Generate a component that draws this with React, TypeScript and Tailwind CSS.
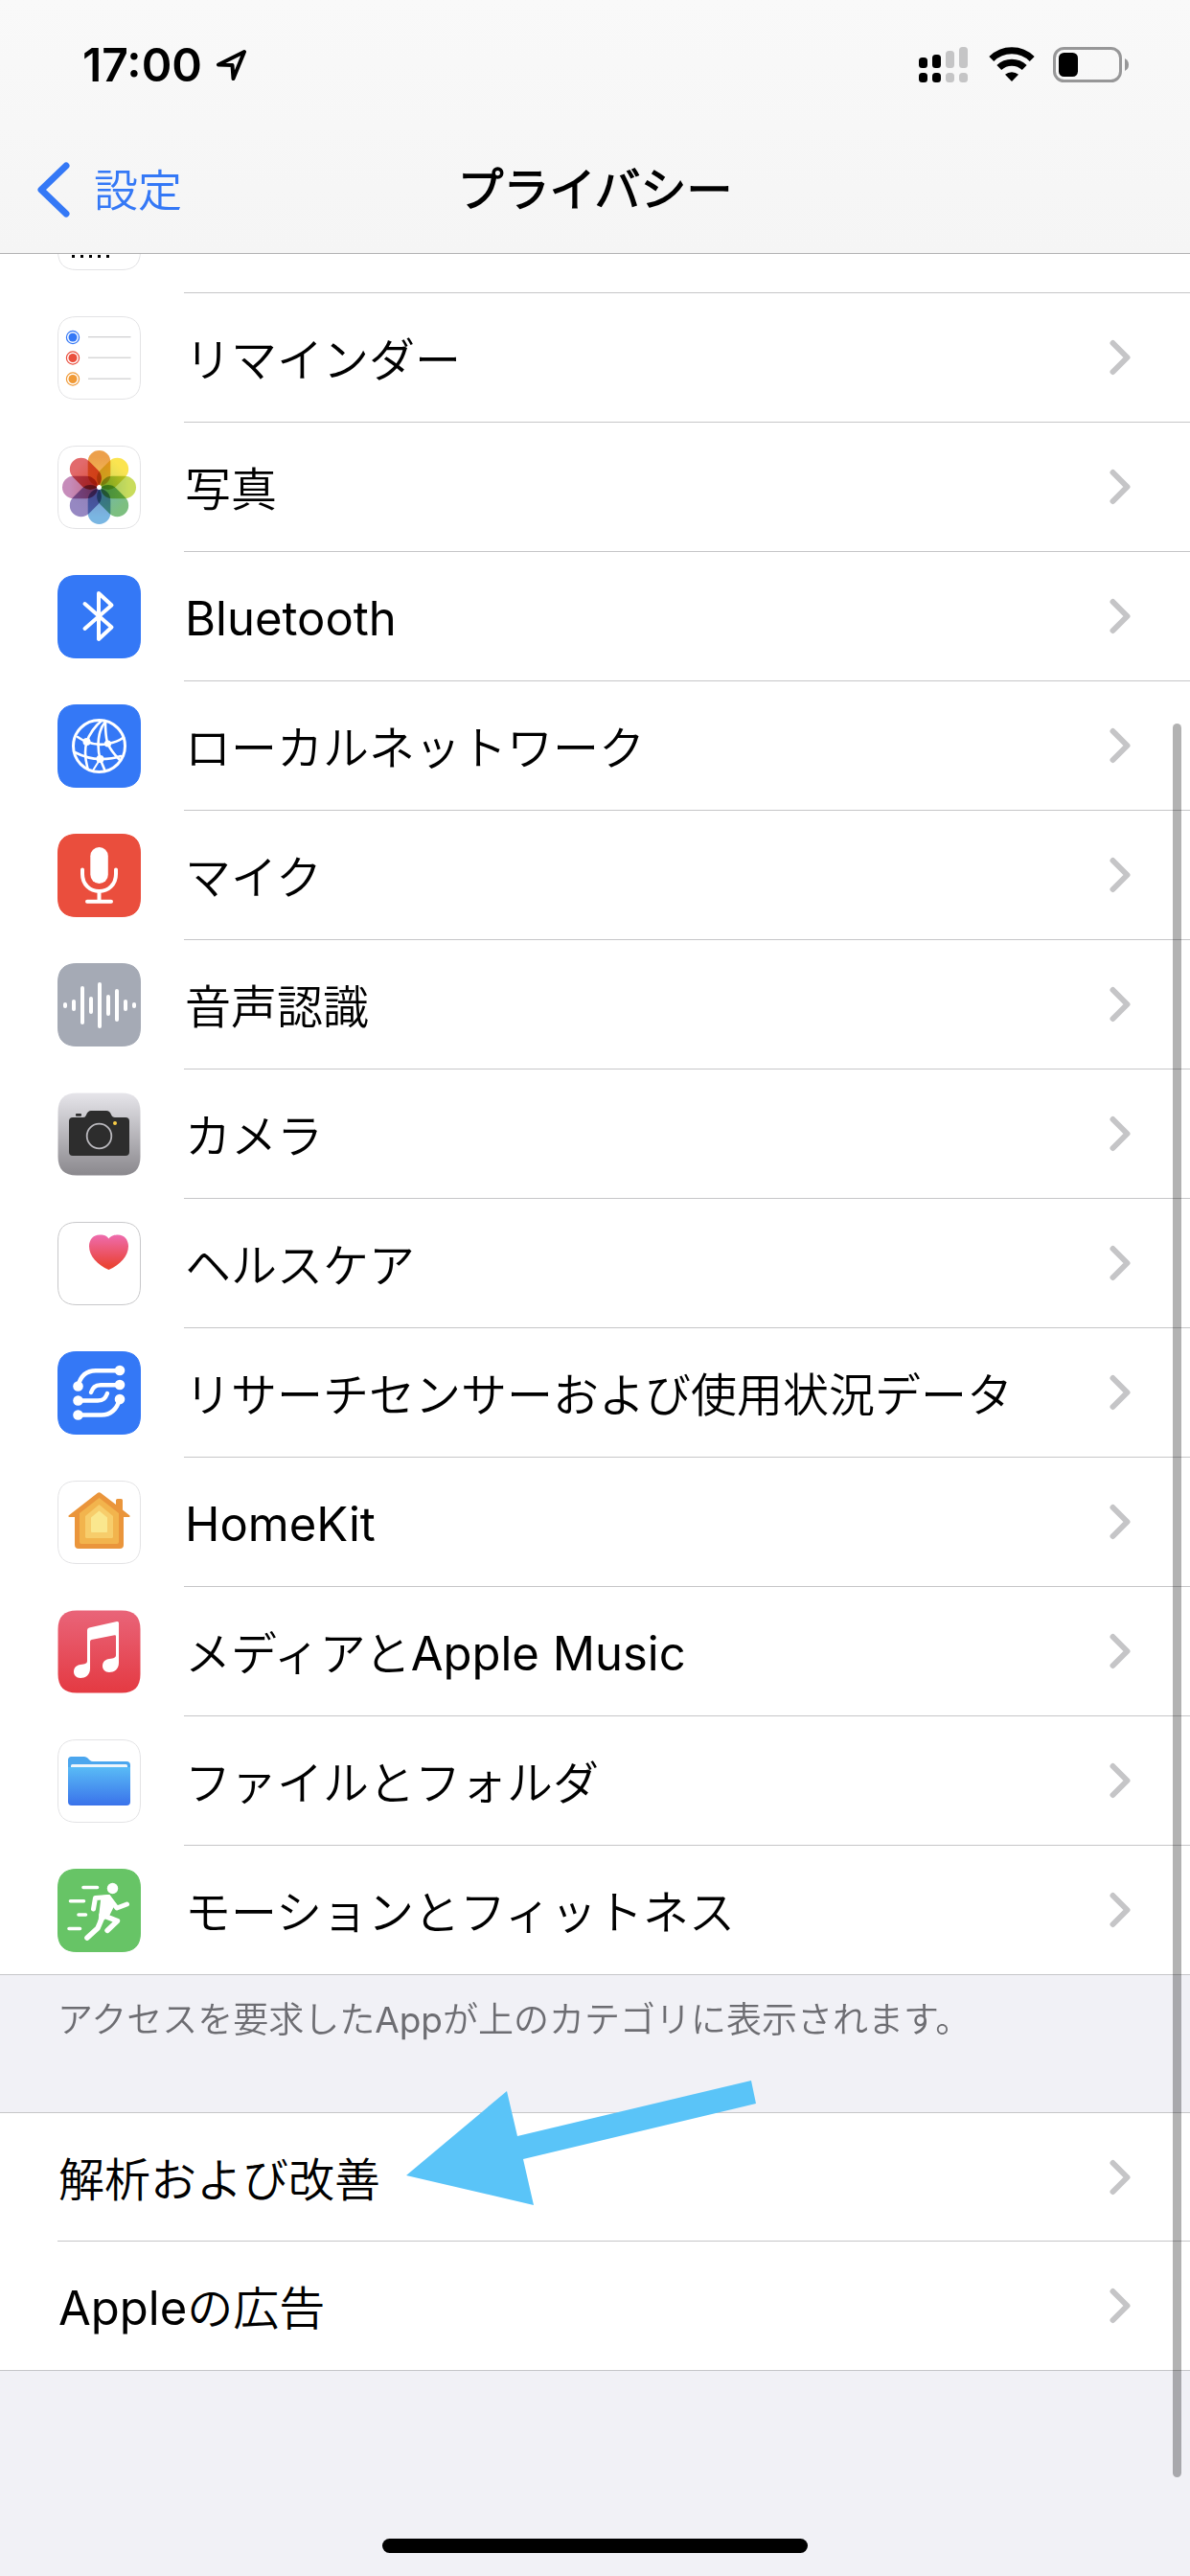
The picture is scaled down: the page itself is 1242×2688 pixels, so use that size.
import type { ReactNode } from "react";

function Chevron() {
  return (
    <svg className="mr-[62px] shrink-0" width="27" height="42" viewBox="0 0 27 42" fill="none" aria-hidden="true">
      <path d="M8.500 6 L23.500 21 L8.500 36" stroke="#c5c5c7" strokeWidth="6" strokeLinecap="round" strokeLinejoin="round" />
    </svg>
  );
}

function Tile({ fill, border, children }: { fill: string; border?: string; children: ReactNode }) {
  return (
    <svg width="87" height="87" viewBox="0 0 87 87" fill="none" aria-hidden="true">
      <path
        d="M20 .5 H67 C80 .5 86.500 7 86.500 20 V67 C86.500 80 80 86.500 67 86.500 H20 C7 86.500 .5 80 .5 67 V20 C.5 7 7 .5 20 .5Z"
        fill={fill}
        stroke={border ?? fill}
      />
      {children}
    </svg>
  );
}

const LIGHT = "#e3e3e5";

function CalendarIcon() {
  return (
    <Tile fill="#fff" border={LIGHT}>
      {[0, 1, 2, 3, 4].map((i) => (
        <rect key={i} x={15 + i * 9} y="71" width="3" height="3" fill="#000" />
      ))}
    </Tile>
  );
}

function RemindersIcon() {
  const rows = [
    { y: 22, color: "#3478f6" },
    { y: 43.5, color: "#ea4e3d" },
    { y: 65.5, color: "#f09a37" },
  ];
  return (
    <Tile fill="#fff" border={LIGHT}>
      {rows.map((r) => (
        <g key={r.y}>
          <circle cx="16" cy={r.y} r="6.600" stroke={r.color} strokeWidth="1.200" />
          <circle cx="16" cy={r.y} r="4.500" fill={r.color} />
          <path d={`M32 ${r.y - 0.3} H76.500`} stroke="#c4c4c6" />
        </g>
      ))}
    </Tile>
  );
}

function PhotosIcon() {
  const petals = [
    { angle: 0, tip: "#eca04b", root: "#f3c457" },
    { angle: 45, tip: "#fbe450", root: "#c9d55c" },
    { angle: 90, tip: "#c9dc5c", root: "#93c062" },
    { angle: 135, tip: "#7dbf80", root: "#70b5b4" },
    { angle: 180, tip: "#7ab6e2", root: "#7a93c8" },
    { angle: 225, tip: "#9688c2", root: "#8f7db5" },
    { angle: 270, tip: "#c68cba", root: "#c0607c" },
    { angle: 315, tip: "#e26a6c", root: "#dc5138" },
  ];
  return (
    <Tile fill="#fff" border={LIGHT}>
      <defs>
        {petals.map((p) => (
          <linearGradient key={p.angle} id={`petal${p.angle}`} x1="0" y1="0" x2="0" y2="1">
            <stop offset="0.200" stopColor={p.tip} />
            <stop offset="1" stopColor={p.root} />
          </linearGradient>
        ))}
      </defs>
      <g style={{ isolation: "isolate" }}>
        {petals.map((p) => (
          <rect
            key={p.angle}
            x="31.700"
            y="5"
            width="23.600"
            height="37"
            rx="11.800"
            fill={`url(#petal${p.angle})`}
            transform={`rotate(${p.angle} 43.500 43.500)`}
            style={{ mixBlendMode: "multiply" }}
          />
        ))}
      </g>
      <circle cx="43.500" cy="43.500" r="2.500" fill="#fff" />
    </Tile>
  );
}

function BluetoothIcon() {
  return (
    <Tile fill="#3478f6">
      <path d="M28.500 30 L56.500 54.500 L43 67 V19 L56.500 31.500 L28.500 56" stroke="#fff" strokeWidth="4" strokeLinecap="round" strokeLinejoin="round" />
    </Tile>
  );
}

function NetworkIcon() {
  return (
    <Tile fill="#3478f6">
      <g stroke="#fff" strokeWidth="2.600" strokeLinecap="round">
        <circle cx="43.500" cy="43.500" r="27" strokeWidth="3" />
        <path d="M46 17 C40 22 33 31 30.500 39 C28 48 29 58 31.500 67" />
        <path d="M50 18 C42 27 41 44 44.500 57 L49.500 69" />
        <path d="M50 18 C50 27 50 34 52.500 41 C56 49 61 54 64.500 57.500" />
        <path d="M21 34 C24 36 27 38 30.500 39 C38 42 46 42.500 52.500 41 C59 40 65 37.500 69 34.500" />
        <path d="M18 50 C26 54 35 57 44.500 57 C53 57 61 56 66 54" />
        <path d="M44.500 57 L37 69" strokeWidth="2" />
      </g>
      <circle cx="30.500" cy="39" r="4" fill="#fff" />
      <circle cx="52.500" cy="41" r="3.600" fill="#fff" />
      <circle cx="44.500" cy="57" r="4" fill="#fff" />
    </Tile>
  );
}

function MicIcon() {
  return (
    <Tile fill="#ea4e3d">
      <rect x="34.300" y="14" width="18.500" height="38" rx="9.200" fill="#fff" />
      <path d="M26 37.500 V42 C26 53 34 60 43.500 60 C53 60 61 53 61 42 V37.500 M43.500 60 V70" stroke="#fff" strokeWidth="4" strokeLinecap="round" />
      <path d="M31 70.700 H56" stroke="#fff" strokeWidth="4" strokeLinecap="round" />
    </Tile>
  );
}

function SpeechIcon() {
  const bars = [6, 12, 40, 18, 48, 22, 34, 12, 6];
  return (
    <Tile fill="#a5aab5">
      {bars.map((h, i) => (
        <rect key={i} x={6 + i * 9} y={44 - h / 2} width="4" height={h} rx="2" fill="#fff" />
      ))}
    </Tile>
  );
}

function CameraIcon() {
  return (
    <Tile fill="url(#cameraBg)" border="none">
      <defs>
        <linearGradient id="cameraBg" x1="0" y1="0" x2="0" y2="1">
          <stop offset="0" stopColor="#e6e5ea" />
          <stop offset="1" stopColor="#8a888d" />
        </linearGradient>
      </defs>
      <path d="M12 30 Q12 26 16 26 H27 Q29 26 30 23.500 Q31.500 19 35 19 H51 Q54.500 19 56 23 Q57 26 60 26 H71 Q75 26 75 30 V62 Q75 66 71 66 H16 Q12 66 12 62Z" fill="#2d2d2d" />
      <rect x="19" y="22" width="6" height="2.800" rx="0.800" fill="#2d2d2d" />
      <circle cx="43.500" cy="45.500" r="12.800" stroke="#b9b8bd" strokeWidth="1.800" />
      <circle cx="60" cy="32" r="2" fill="#f7cb45" />
    </Tile>
  );
}

function HealthIcon() {
  return (
    <Tile fill="#fff" border="#c8c8ca">
      <defs>
        <linearGradient id="heart" x1="0" y1="0" x2="0" y2="1">
          <stop offset="0" stopColor="#ee6cae" />
          <stop offset="0.900" stopColor="#ea4335" />
        </linearGradient>
      </defs>
      <path d="M53.500 17.500 C51 13.500 47 13.500 44 13.500 C37 13.500 33 19 33 25.500 C33 36 42 45 53.500 50 C65 45 74 36 74 25.500 C74 19 70 13.500 63 13.500 C60 13.500 56 14 53.500 17.500Z" fill="url(#heart)" />
    </Tile>
  );
}

function ResearchIcon() {
  const dots = [[65, 20], [65, 35], [65, 50], [21.500, 36.500], [21.500, 51.500], [21.500, 66.500]];
  return (
    <Tile fill="#3478f6">
      <g stroke="#fff" strokeWidth="4.400" strokeLinecap="round">
        <path d="M21.500 36 C24 26 30 20.300 40 20.300 H65" />
        <path d="M35 43 C37 38 39 35.300 45 35.300 H65" />
        <path d="M21.500 51.500 H42 C48 51.500 50 49 52 44" />
        <path d="M21.500 66.500 H46 C56 66.500 62 60 65 50" />
      </g>
      {dots.map(([x, y]) => (
        <circle key={`${x}-${y}`} cx={x} cy={y} r="5.300" fill="#fff" />
      ))}
    </Tile>
  );
}

function HomeIcon() {
  return (
    <Tile fill="#fff" border={LIGHT}>
      <path d="M42 12.800 Q43.500 11.500 45 12.800 L61 25 V20.500 Q61 19 62.500 19 H66.500 Q68 19 68 20.500 V30.500 L75.500 36.500 Q76 38 74.500 38 H69 V67 Q69 71 65 71 H22 Q18 71 18 67 V38 H12.500 Q11 38 11.500 36.500Z" fill="#ea953b" />
      <path d="M43.500 18 L64 34 V64 Q64 66 62 66 H25 Q23 66 23 64 V34Z" fill="#f2b44d" />
      <path d="M43.500 25 L58 37 V58.500 Q58 60 56.500 60 H30.500 Q29 60 29 58.500 V37Z" fill="#f7cd6b" />
      <path d="M43.500 31.500 L52 38.500 V53 Q52 54 51 54 H36 Q35 54 35 53 V38.500Z" fill="#fae78e" />
    </Tile>
  );
}

function MusicIcon() {
  return (
    <Tile fill="url(#musicBg)" border="none">
      <defs>
        <linearGradient id="musicBg" x1="0" y1="0" x2="0" y2="1">
          <stop offset="0" stopColor="#e96479" />
          <stop offset="1" stopColor="#e43a42" />
        </linearGradient>
      </defs>
      <path d="M33 18.500 L62 12 Q64 11.700 64 13.500 V55 C64 62 59 65 54 65 C49.500 65 47 62 47 58.500 C47 54 50 51.500 54 51 C59 50.200 61 50 61 47 V27.500 Q61 26 59.500 26.300 L35.500 31 Q34 31.300 34 33 V61 C34 68 29 71 24 71 C19.500 71 17 68 17 64.500 C17 60 20 57.500 24 57 C29 56.300 31 56 31 53 V21 Q31 19 33 18.500Z" fill="#fff" />
    </Tile>
  );
}

function FilesIcon() {
  return (
    <Tile fill="#fff" border={LIGHT}>
      <defs>
        <linearGradient id="folder" x1="0" y1="0" x2="0" y2="1">
          <stop offset="0" stopColor="#59bbf6" />
          <stop offset="1" stopColor="#3a72ea" />
        </linearGradient>
      </defs>
      <path d="M11 21.500 Q11 18 14.500 18 H28 Q30 18 31.500 19.500 L34 22 Q35 23 37 23 H72 Q76 23 76 27 V36 H11Z" fill="#4ba6ee" />
      <rect x="14" y="26" width="59" height="6" rx="1.500" fill="#eef5fb" />
      <path d="M11 29 H76 V65 Q76 69 72 69 H15 Q11 69 11 65Z" fill="url(#folder)" />
    </Tile>
  );
}

function FitnessIcon() {
  return (
    <Tile fill="#67c466">
      <g stroke="#fff" strokeLinecap="round" strokeLinejoin="round">
        <path d="M27 19.500 H41.500 M13.500 33.700 H27.500 M22 48 H29.500 M12 62.500 H23.500" strokeWidth="3.600" />
        <path d="M37.500 42 L39.500 30.500 L53 29.500 L62 41 L72.500 37" strokeWidth="5" />
        <path d="M46 48 L62.500 54.500 L52 64.500" strokeWidth="5.400" />
        <path d="M48 48 L42 62 L31 72" strokeWidth="5.600" />
      </g>
      <path d="M46.500 29 L54 28 L59.500 36 L52.500 50 L43.500 55 Z" fill="#fff" stroke="#fff" strokeWidth="2" strokeLinejoin="round" />
      <circle cx="57.500" cy="20.500" r="5.700" fill="#fff" />
    </Tile>
  );
}

const services: { label: string; icon: ReactNode }[] = [
  { label: "リマインダー", icon: <RemindersIcon /> },
  { label: "写真", icon: <PhotosIcon /> },
  { label: "Bluetooth", icon: <BluetoothIcon /> },
  { label: "ローカルネットワーク", icon: <NetworkIcon /> },
  { label: "マイク", icon: <MicIcon /> },
  { label: "音声認識", icon: <SpeechIcon /> },
  { label: "カメラ", icon: <CameraIcon /> },
  { label: "ヘルスケア", icon: <HealthIcon /> },
  { label: "リサーチセンサーおよび使用状況データ", icon: <ResearchIcon /> },
  { label: "HomeKit", icon: <HomeIcon /> },
  { label: "メディアとApple Music", icon: <MusicIcon /> },
  { label: "ファイルとフォルダ", icon: <FilesIcon /> },
  { label: "モーションとフィットネス", icon: <FitnessIcon /> },
];

/* Latin words are set one step heavier than the Japanese around them. */
function Label({ text }: { text: string }) {
  return (
    <span className="pt-1.5 pl-px text-[48px] leading-[72px]">
      {text.split(/([A-Za-z ]+)/).map((part, i) =>
        i % 2 === 1 ? (
          <span key={i} className="text-[49px] font-normal">
            {part}
          </span>
        ) : (
          part
        ),
      )}
    </span>
  );
}

function Row({ label, icon, last }: { label: string; icon?: ReactNode; last?: boolean }) {
  return (
    <li className={last ? "border-b border-[#c6c6c8]" : ""}>
      <a href="#" className="flex pl-[60px]">
        {icon && <span className="flex w-[132px] shrink-0 items-center">{icon}</span>}
        <span className={`flex min-w-0 grow items-center justify-between ${last ? "h-[134px]" : icon ? "h-[135px] border-b border-[#c6c6c8]" : "h-[134px] border-b border-[#c6c6c8]"}`}>
          <Label text={label} />
          <Chevron />
        </span>
      </a>
    </li>
  );
}

function StatusBar() {
  return (
    <div className="flex h-[132px] items-center justify-between pt-1 pr-[64px] pl-[86px]">
      <div className="flex items-center gap-3.5">
        <span className="text-[48px] leading-[72px] font-semibold">17:00</span>
        <svg width="33" height="35" viewBox="0 0 33 35" fill="none" aria-label="位置情報">
          <path d="M30 3 L3 16.500 L17.500 17 L18.500 31Z" stroke="#000" strokeWidth="4" strokeLinejoin="round" />
        </svg>
      </div>
      <div className="flex items-center">
        <svg width="51" height="38" viewBox="0 0 51 38" aria-label="モバイル通信">
          {[11, 14, 18, 22].map((h, i) => (
            <g key={h} fill={i < 2 ? "#000" : "#c5c5c6"}>
              <rect x={i * 14} y={22 - h} width="9" height={h} rx="3.500" />
              <rect x={i * 14} y="27" width="9" height="10" rx="3.500" />
            </g>
          ))}
        </svg>
        <svg className="ml-[22px]" width="48" height="38" viewBox="0 0 48 38" fill="none" aria-label="Wi-Fi">
          <path d="M2.800 12.500 A30 30 0 0 1 45.200 12.500" stroke="#000" strokeWidth="7" />
          <path d="M10.800 21.500 A19 19 0 0 1 37.200 21.500" stroke="#000" strokeWidth="7" />
          <path d="M24 36 L17 28.800 A10.500 10.500 0 0 1 31 28.800Z" fill="#000" />
        </svg>
        <svg className="ml-[19px]" width="79" height="38" viewBox="0 0 79 38" fill="none" aria-label="バッテリー">
          <rect x="1.500" y="1.500" width="69" height="34" rx="10" stroke="#979798" strokeWidth="3" />
          <rect x="6" y="6" width="20" height="25" rx="5.500" fill="#000" />
          <path d="M75 12 Q79 14 79 18.500 Q79 23 75 25Z" fill="#979798" />
        </svg>
      </div>
    </div>
  );
}

export default function App() {
  return (
    <div className="relative flex min-h-screen w-full flex-col overflow-hidden bg-[#f1f1f6] font-[Inter,'Noto_Sans_CJK_JP_DemiLight','Noto_Sans_CJK_JP',sans-serif] font-[350] text-black">
      <header className="border-b border-[#b2b2b3] bg-linear-to-b from-[#f9f9f9] to-[#f5f5f5]">
        <StatusBar />
        <div className="grid h-[132px] grid-cols-3 items-center">
          <button type="button" className="flex items-center gap-6 justify-self-start pl-[38px] text-[46px] leading-[72px] text-[#3478f6]">
            <svg width="36" height="58" viewBox="0 0 36 58" fill="none" aria-hidden="true">
              <path d="M31 4 L5 29 L31 54" stroke="#3478f6" strokeWidth="7" strokeLinecap="round" strokeLinejoin="round" />
            </svg>
            設定
          </button>
          <h1 className="text-center text-[48px] leading-[72px] font-bold whitespace-nowrap">プライバシー</h1>
        </div>
      </header>

      <main>
        <ul className="bg-white">
          <li className="flex h-[41px] items-end overflow-hidden pl-[60px]">
            <span className="flex w-[132px] shrink-0 pb-6">
              <CalendarIcon />
            </span>
            <span className="grow border-b border-[#c6c6c8]" />
          </li>
          {services.map((s, i) => (
            <Row key={s.label} label={s.label} icon={s.icon} last={i === services.length - 1} />
          ))}
        </ul>

        <p className="px-[60px] pt-5 pb-[69px] text-[37px] leading-[54px] text-[#6d6d72]">
          アクセスを要求した<span className="font-normal">App</span>が上のカテゴリに表示されます。
        </p>

        <div className="relative">
          <ul className="border-t border-[#c6c6c8] bg-white">
            <Row label="解析および改善" />
            <Row label="Appleの広告" last />
          </ul>
          <svg className="absolute -top-[34px] left-[424px]" width="366" height="136" viewBox="0 0 366 136" aria-hidden="true">
            <path d="M0 100 L105 12 L116 59 L360 1 L365 25 L122 83 L133 131Z" fill="#5ac4f8" />
          </svg>
        </div>
      </main>

      <div className="absolute top-[755px] right-[9px] bottom-[103px] w-[9px] rounded-full bg-black/30" />
      <div className="mt-auto flex justify-center pb-6">
        <div className="h-[15px] w-[444px] rounded-full bg-black" />
      </div>
    </div>
  );
}
